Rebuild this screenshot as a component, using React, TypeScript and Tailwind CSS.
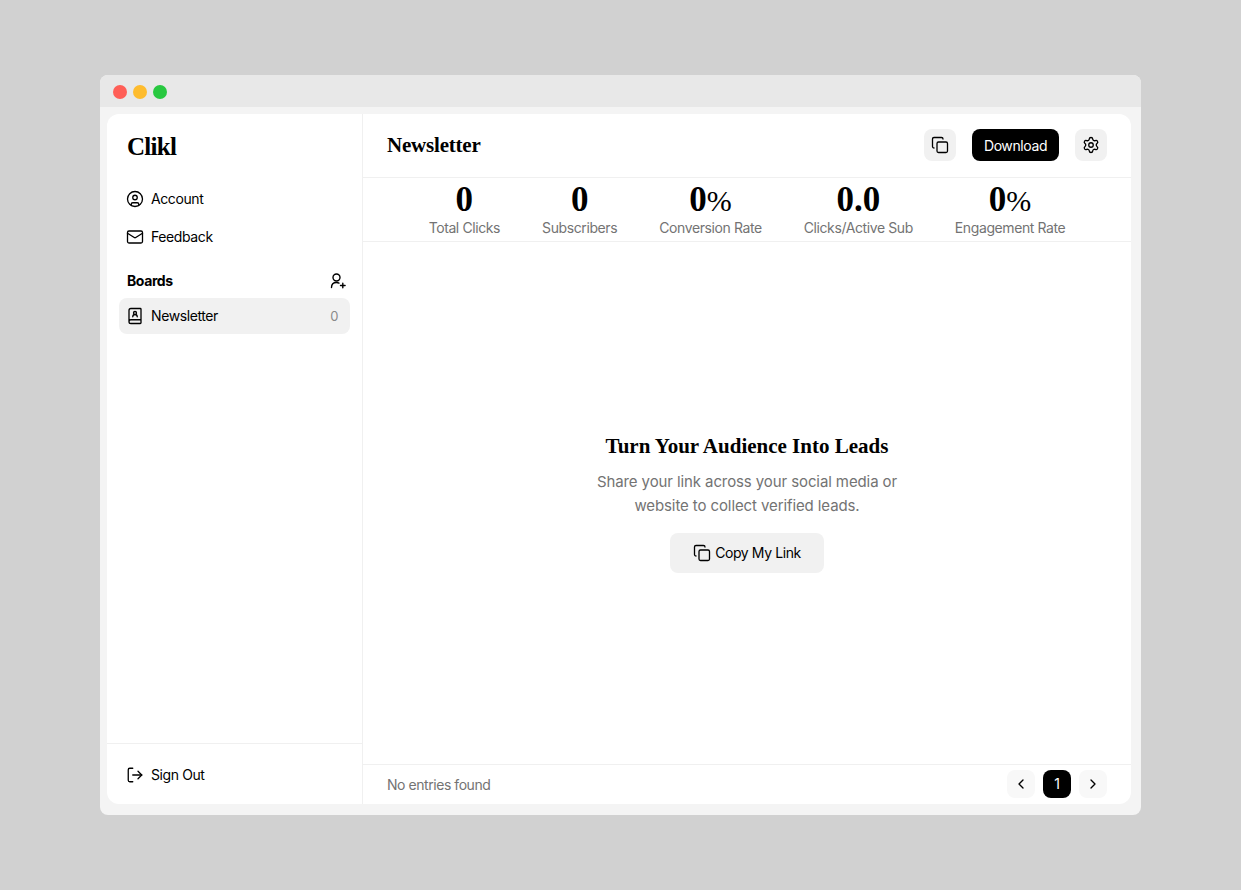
import { BookUser, ChevronLeft, ChevronRight, CircleUser, Copy, LogOut, Mail, Settings } from 'lucide-react';

const serif = "font-['Liberation_Serif',serif]";

const stats = [
  { value: '0', label: 'Total Clicks' },
  { value: '0', label: 'Subscribers' },
  { value: '0', percent: true, label: 'Conversion Rate' },
  { value: '0.0', label: 'Clicks/Active Sub' },
  { value: '0', percent: true, label: 'Engagement Rate' },
];

function AddUserIcon() {
  return (
    <svg width="16" height="16" viewBox="0 0 16 16" fill="none" stroke="currentColor" strokeWidth="1.4" strokeLinecap="round">
      <circle cx="6.5" cy="4.5" r="3.5" />
      <path d="M1.5 14.5c0-3 2-5 5-5 1 0 1.8.2 2.5.6" />
      <path d="M12.8 10.2v4.6M10.5 12.5h4.6" />
    </svg>
  );
}

function Sidebar() {
  return (
    <aside className="flex w-[256px] shrink-0 flex-col border-r border-[#f0f0f0]">
      <div className={`${serif} pl-5 pt-[15px] text-[25px] font-bold leading-[36px] tracking-[-0.7px] text-black`}>Clikl</div>

      <nav className="mt-[22px] flex flex-col gap-[14px] pl-[19px] text-sm tracking-[-0.4px] text-black">
        <div className="flex h-6 items-center gap-[7px]">
          <CircleUser size={18} strokeWidth={1.75} />
          <span>Account</span>
        </div>
        <div className="flex h-6 items-center gap-[7px]">
          <Mail size={18} strokeWidth={1.75} />
          <span>Feedback</span>
        </div>
      </nav>

      <div className="mt-[20px] flex h-6 items-center justify-between pl-5 pr-[16px]">
        <span className="text-sm font-bold tracking-[-0.4px] text-black">Boards</span>
        <AddUserIcon />
      </div>

      <div className="mx-3 mt-[5px] flex h-9 items-center justify-between rounded-lg bg-[#f1f1f1] pl-[7px] pr-3 text-sm tracking-[-0.4px] text-black">
        <div className="flex items-center gap-[7px]">
          <BookUser size={18} strokeWidth={1.75} />
          <span>Newsletter</span>
        </div>
        <span className="text-[13px] text-[#8a8a8a]">0</span>
      </div>

      <div className="mt-auto flex h-[61px] items-center gap-[7px] border-t border-[#f0f0f0] pl-[19px] pt-0.5 text-sm tracking-[-0.4px] text-black">
        <LogOut size={18} strokeWidth={1.75} />
        <span>Sign Out</span>
      </div>
    </aside>
  );
}

function Main() {
  return (
    <main className="flex min-w-0 flex-1 flex-col">
      <header className="flex h-[64px] shrink-0 items-center justify-between border-b border-[#f0f0f0] pb-px pl-6 pr-6">
        <h1 className={`${serif} mt-[2px] text-[21px] font-bold tracking-[-0.2px] text-black`}>Newsletter</h1>
        <div className="flex items-center gap-4">
          <button className="flex size-8 items-center justify-center rounded-lg bg-[#f1f1f1]">
            <Copy size={18} strokeWidth={1.75} />
          </button>
          <button className="flex h-8 w-[87px] items-center justify-center rounded-lg bg-black pt-px text-sm tracking-[-0.4px] text-white">Download</button>
          <button className="flex size-8 items-center justify-center rounded-lg bg-[#f1f1f1]">
            <Settings size={18} strokeWidth={1.75} />
          </button>
        </div>
      </header>

      <section className="flex h-[64px] shrink-0 items-center justify-center gap-[42px] border-b border-[#f0f0f0] pb-[2px]">
        {stats.map((s) => (
          <div key={s.label} className="flex flex-col items-center">
            <span className={`${serif} flex h-[38px] items-baseline text-[35px] font-bold leading-[38px] text-black`}>
              {s.value}
              {s.percent && <span className="text-[30px] font-normal leading-none">%</span>}
            </span>
            <span className="text-sm leading-[18px] tracking-[-0.4px] text-[#737373]">{s.label}</span>
          </div>
        ))}
      </section>

      <section className="flex flex-1 flex-col items-center justify-center pb-[3px]">
        <h2 className={`${serif} text-[21px] font-bold leading-[30px] text-black`}>Turn Your Audience Into Leads</h2>
        <p className="mt-[9px] w-[320px] text-center text-[15px] leading-6 tracking-[-0.1px] text-[#737373]">
          Share your link across your social media or website to collect verified leads.
        </p>
        <button className="mt-[15px] flex h-10 w-[154px] items-center justify-center gap-[4px] rounded-lg bg-[#f1f1f1] pt-px text-sm tracking-[-0.4px] text-black">
          <Copy size={18} strokeWidth={1.75} />
          Copy My Link
        </button>
      </section>

      <footer className="flex h-[40px] shrink-0 items-center justify-between border-t border-[#f0f0f0] pb-px pl-6 pr-6">
        <span className="mt-px text-sm tracking-[-0.45px] text-[#737373]">No entries found</span>
        <div className="flex items-center gap-2">
          <button className="flex size-7 items-center justify-center rounded-lg bg-[#f8f8f8]">
            <ChevronLeft size={16} strokeWidth={2} />
          </button>
          <button className="flex size-7 items-center justify-center rounded-lg bg-black text-sm text-white">1</button>
          <button className="flex size-7 items-center justify-center rounded-lg bg-[#f8f8f8]">
            <ChevronRight size={16} strokeWidth={2} />
          </button>
        </div>
      </footer>
    </main>
  );
}

export default function App() {
  return (
    <div className="flex h-screen items-center justify-center bg-[#d1d1d1] font-['Inter',sans-serif]">
      <div className="flex h-[740px] w-[1041px] flex-col overflow-hidden rounded-lg bg-[#f4f4f4]">
        <div className="flex h-8 shrink-0 items-center gap-[6px] bg-[#e8e8e8] pl-[13px] pt-px">
          <span className="size-[14px] rounded-full bg-[#ff5f57]" />
          <span className="size-[14px] rounded-full bg-[#febc2e]" />
          <span className="size-[14px] rounded-full bg-[#28c840]" />
        </div>
        <div className="ml-[7px] mr-[10px] mt-[7px] flex h-[690px] overflow-hidden rounded-xl bg-white">
          <Sidebar />
          <Main />
        </div>
      </div>
    </div>
  );
}
